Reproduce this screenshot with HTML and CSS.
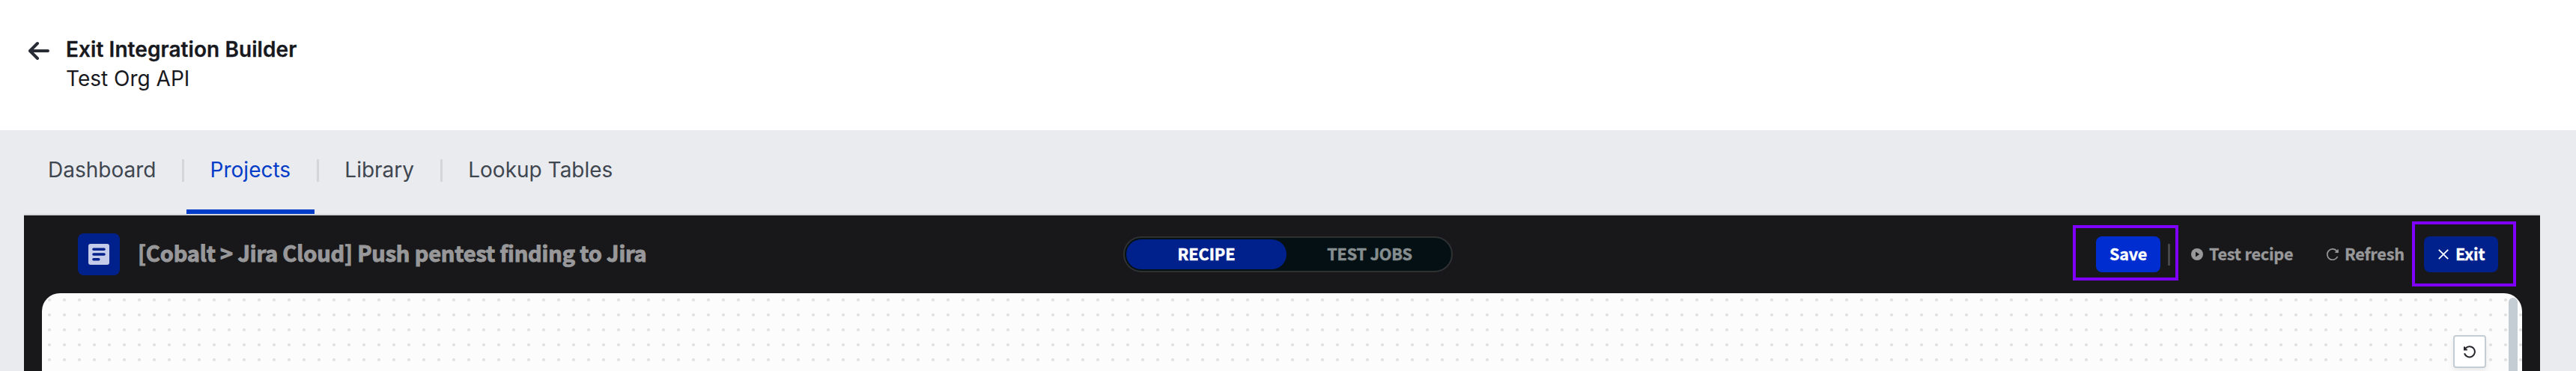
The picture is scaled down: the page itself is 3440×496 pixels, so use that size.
FILE: index.html
```html
<!DOCTYPE html>
<html lang="en">
<head>
<meta charset="utf-8">
<title>Integration Builder</title>
<link rel="stylesheet" href="styles.css">
</head>
<body>
<header class="header">
  <svg class="back" width="28" height="26" viewBox="0 0 28 26" fill="none" stroke="#282c35" stroke-width="4" stroke-linecap="round" stroke-linejoin="round"><path d="M26 13H3M12 3L2 13l10 10"/></svg>
  <div class="heading">
    <div class="heading-title">Exit Integration Builder</div>
    <div class="heading-sub">Test Org API</div>
  </div>
</header>
<main class="main">
  <nav class="tabs">
    <a class="tab">Dashboard</a>
    <span class="tab-sep"></span>
    <a class="tab tab-active">Projects</a>
    <span class="tab-sep"></span>
    <a class="tab">Library</a>
    <span class="tab-sep"></span>
    <a class="tab">Lookup Tables</a>
  </nav>
  <section class="editor">
    <div class="toolbar">
      <div class="recipe">
        <span class="recipe-icon"><svg width="28" height="28" viewBox="0 0 28 28"><rect width="28" height="28" rx="3" fill="#c5cce9"/><path d="M7 7.2H21M7 14H21M7 20.8H13.8" stroke="#00218c" stroke-width="3.6" stroke-linecap="round"/></svg></span>
        <span class="recipe-name">[Cobalt &gt; Jira Cloud] Push pentest finding to Jira</span>
      </div>
      <div class="switch">
        <span class="switch-item switch-on">RECIPE</span>
        <span class="switch-item switch-off">TEST JOBS</span>
      </div>
      <div class="actions">
        <button class="btn btn-save"><span class="label">Save</span></button>
        <span class="actions-sep"></span>
        <span class="action action-test"><svg width="16" height="16" viewBox="0 0 16 16"><circle cx="8" cy="8" r="8" fill="#98989a"/><path d="M6 4.6L11.2 8 6 11.4z" fill="#18181a"/></svg><span class="label">Test recipe</span></span>
        <span class="action action-refresh"><svg width="16" height="16" viewBox="0 0 16 16" fill="none" stroke="#98989a" stroke-width="1.7"><path d="M14.6 11A7.2 7.2 0 1 1 13.6 3.6L14.6 5M15 1.6V5.2H11.4"/></svg><span class="label">Refresh</span></span>
        <button class="btn btn-exit"><svg width="14" height="14" viewBox="0 0 14 14" stroke="#fff" stroke-width="1.8"><path d="M.8 .8L13.2 13.2M13.2 .8L.8 13.2"/></svg><span class="label">Exit</span></button>
      </div>
    </div>
    <div class="canvas">
      <button class="undo"><svg width="18" height="18" viewBox="0 0 18 18" fill="none" stroke="#26262c" stroke-width="2"><path d="M2 11.4A7.1 7.1 0 1 0 3.6 4.4L2.4 6M2 2.6V6.4H5.8"/></svg></button>
      <div class="scroll-thumb"></div>
    </div>
  </section>
</main>
<div class="mark mark-save"></div>
<div class="mark mark-exit"></div>
</body>
</html>
```

FILE: styles.css
```css
* { box-sizing: border-box; }
body {
  margin: 0;
  width: 3440px;
  height: 496px;
  overflow: hidden;
  position: relative;
  background: #eaebef;
  font-family: Inter, sans-serif;
}
svg { display: block; flex: none; }
button { border: 0; padding: 0; font: inherit; letter-spacing: inherit; }
.header {
  height: 174px;
  background: #fff;
  display: flex;
  align-items: flex-start;
  gap: 22px;
  padding: 47px 0 0 38px;
  font-size: 28px;
  line-height: 39px;
  color: #18191e;
}
.back { margin-top: 8px; }
.heading-title { font-weight: 600; letter-spacing: .08px; white-space: nowrap; -webkit-text-stroke: .3px #18191e; }
.main { padding: 0 48px 0 32px; }
.tabs {
  height: 114px;
  display: flex;
  align-items: stretch;
  gap: 2.6px;
  border-bottom: 2px solid #d2d5d9;
}
.tab {
  display: flex;
  padding: 36px 32px 0;
  font-size: 28px;
  line-height: 34px;
  color: #3e4650;
  white-space: nowrap;
}
.tab-active { color: #003cc8; border-bottom: 6px solid #003cc8; }
.tab-sep { width: 3px; height: 30px; margin-top: 39px; background: #d2d5d9; }
.editor {
  height: 208px;
  background: #18181a;
  padding: 0 24px;
  font-family: "Noto Sans CJK SC", sans-serif;
  font-weight: 700;
}
.toolbar {
  height: 104px;
  display: grid;
  grid-template-columns: 1fr 440px 1fr;
  align-items: center;
  padding: 0 32px 0 48px;
  -webkit-text-stroke: .35px currentColor;
}
.recipe { display: flex; align-items: center; gap: 24px; }
.recipe-icon {
  width: 56px;
  height: 56px;
  border-radius: 8px;
  background: #00218c;
  display: grid;
  place-items: center;
}
.recipe-name {
  font-size: 29px;
  line-height: 51px;
  letter-spacing: -.17px;
  padding-bottom: 5px;
  color: #98989a;
  -webkit-text-stroke: 1px #98989a;
  white-space: nowrap;
}
.switch {
  height: 48px;
  display: flex;
  padding: 2px;
  border: 2px solid #2f3032;
  border-radius: 24px;
  background: #041014;
  font-size: 21.6px;
  line-height: 37px;
  color: #858d8f;
}
.switch-item { text-align: center; border-radius: 20px; -webkit-text-stroke: .6px currentColor; }
.switch-on { width: 214px; background: #00218c; color: #fff; }
.switch-off { flex: 1; padding-left: 4px; letter-spacing: -.15px; }
.actions {
  display: flex;
  justify-content: flex-end;
  align-items: center;
  font-size: 21.6px;
  letter-spacing: -.2px;
  color: #98989a;
  white-space: nowrap;
}
.label { line-height: 45px; padding-bottom: 3px; -webkit-text-stroke: .35px currentColor; }
.btn {
  height: 48px;
  border-radius: 8px;
  color: #fff;
  display: flex;
  align-items: center;
}
.btn-save { width: 86px; justify-content: center; background: #002dd0; }
.actions-sep { width: 3px; height: 29px; margin: 0 28px 0 10px; background: #464648; }
.action { display: flex; align-items: center; gap: 8px; }
.action-test { width: 181px; }
.action-refresh { width: 130px; }
.btn-exit { width: 99px; gap: 9px; padding-left: 19px; background: #00218c; }
.canvas {
  height: 104px;
  position: relative;
  overflow: hidden;
  border-radius: 24px 24px 0 0;
  background: #fcfcfc radial-gradient(circle at 10px 9px, #e2e2e2 1.8px, transparent 2.3px) 0 0 / 20px 20px;
}
.undo {
  position: absolute;
  right: 48px;
  top: 56px;
  width: 44px;
  height: 44px;
  border: 2px solid #c4ccd4;
  border-radius: 4px;
  background: #fff;
  box-shadow: 0 4px 8px rgba(0, 0, 0, .08);
  display: grid;
  place-items: center;
}
.scroll-thumb {
  position: absolute;
  right: 6px;
  top: 6px;
  width: 12px;
  height: 120px;
  border-radius: 6px;
  background: #c4ccd4;
}
.mark { position: absolute; border: 4px solid #8000ff; }
.mark-save { left: 2768px; top: 301px; width: 141px; height: 74px; }
.mark-exit { left: 3221px; top: 296px; width: 139px; height: 87px; }
```
